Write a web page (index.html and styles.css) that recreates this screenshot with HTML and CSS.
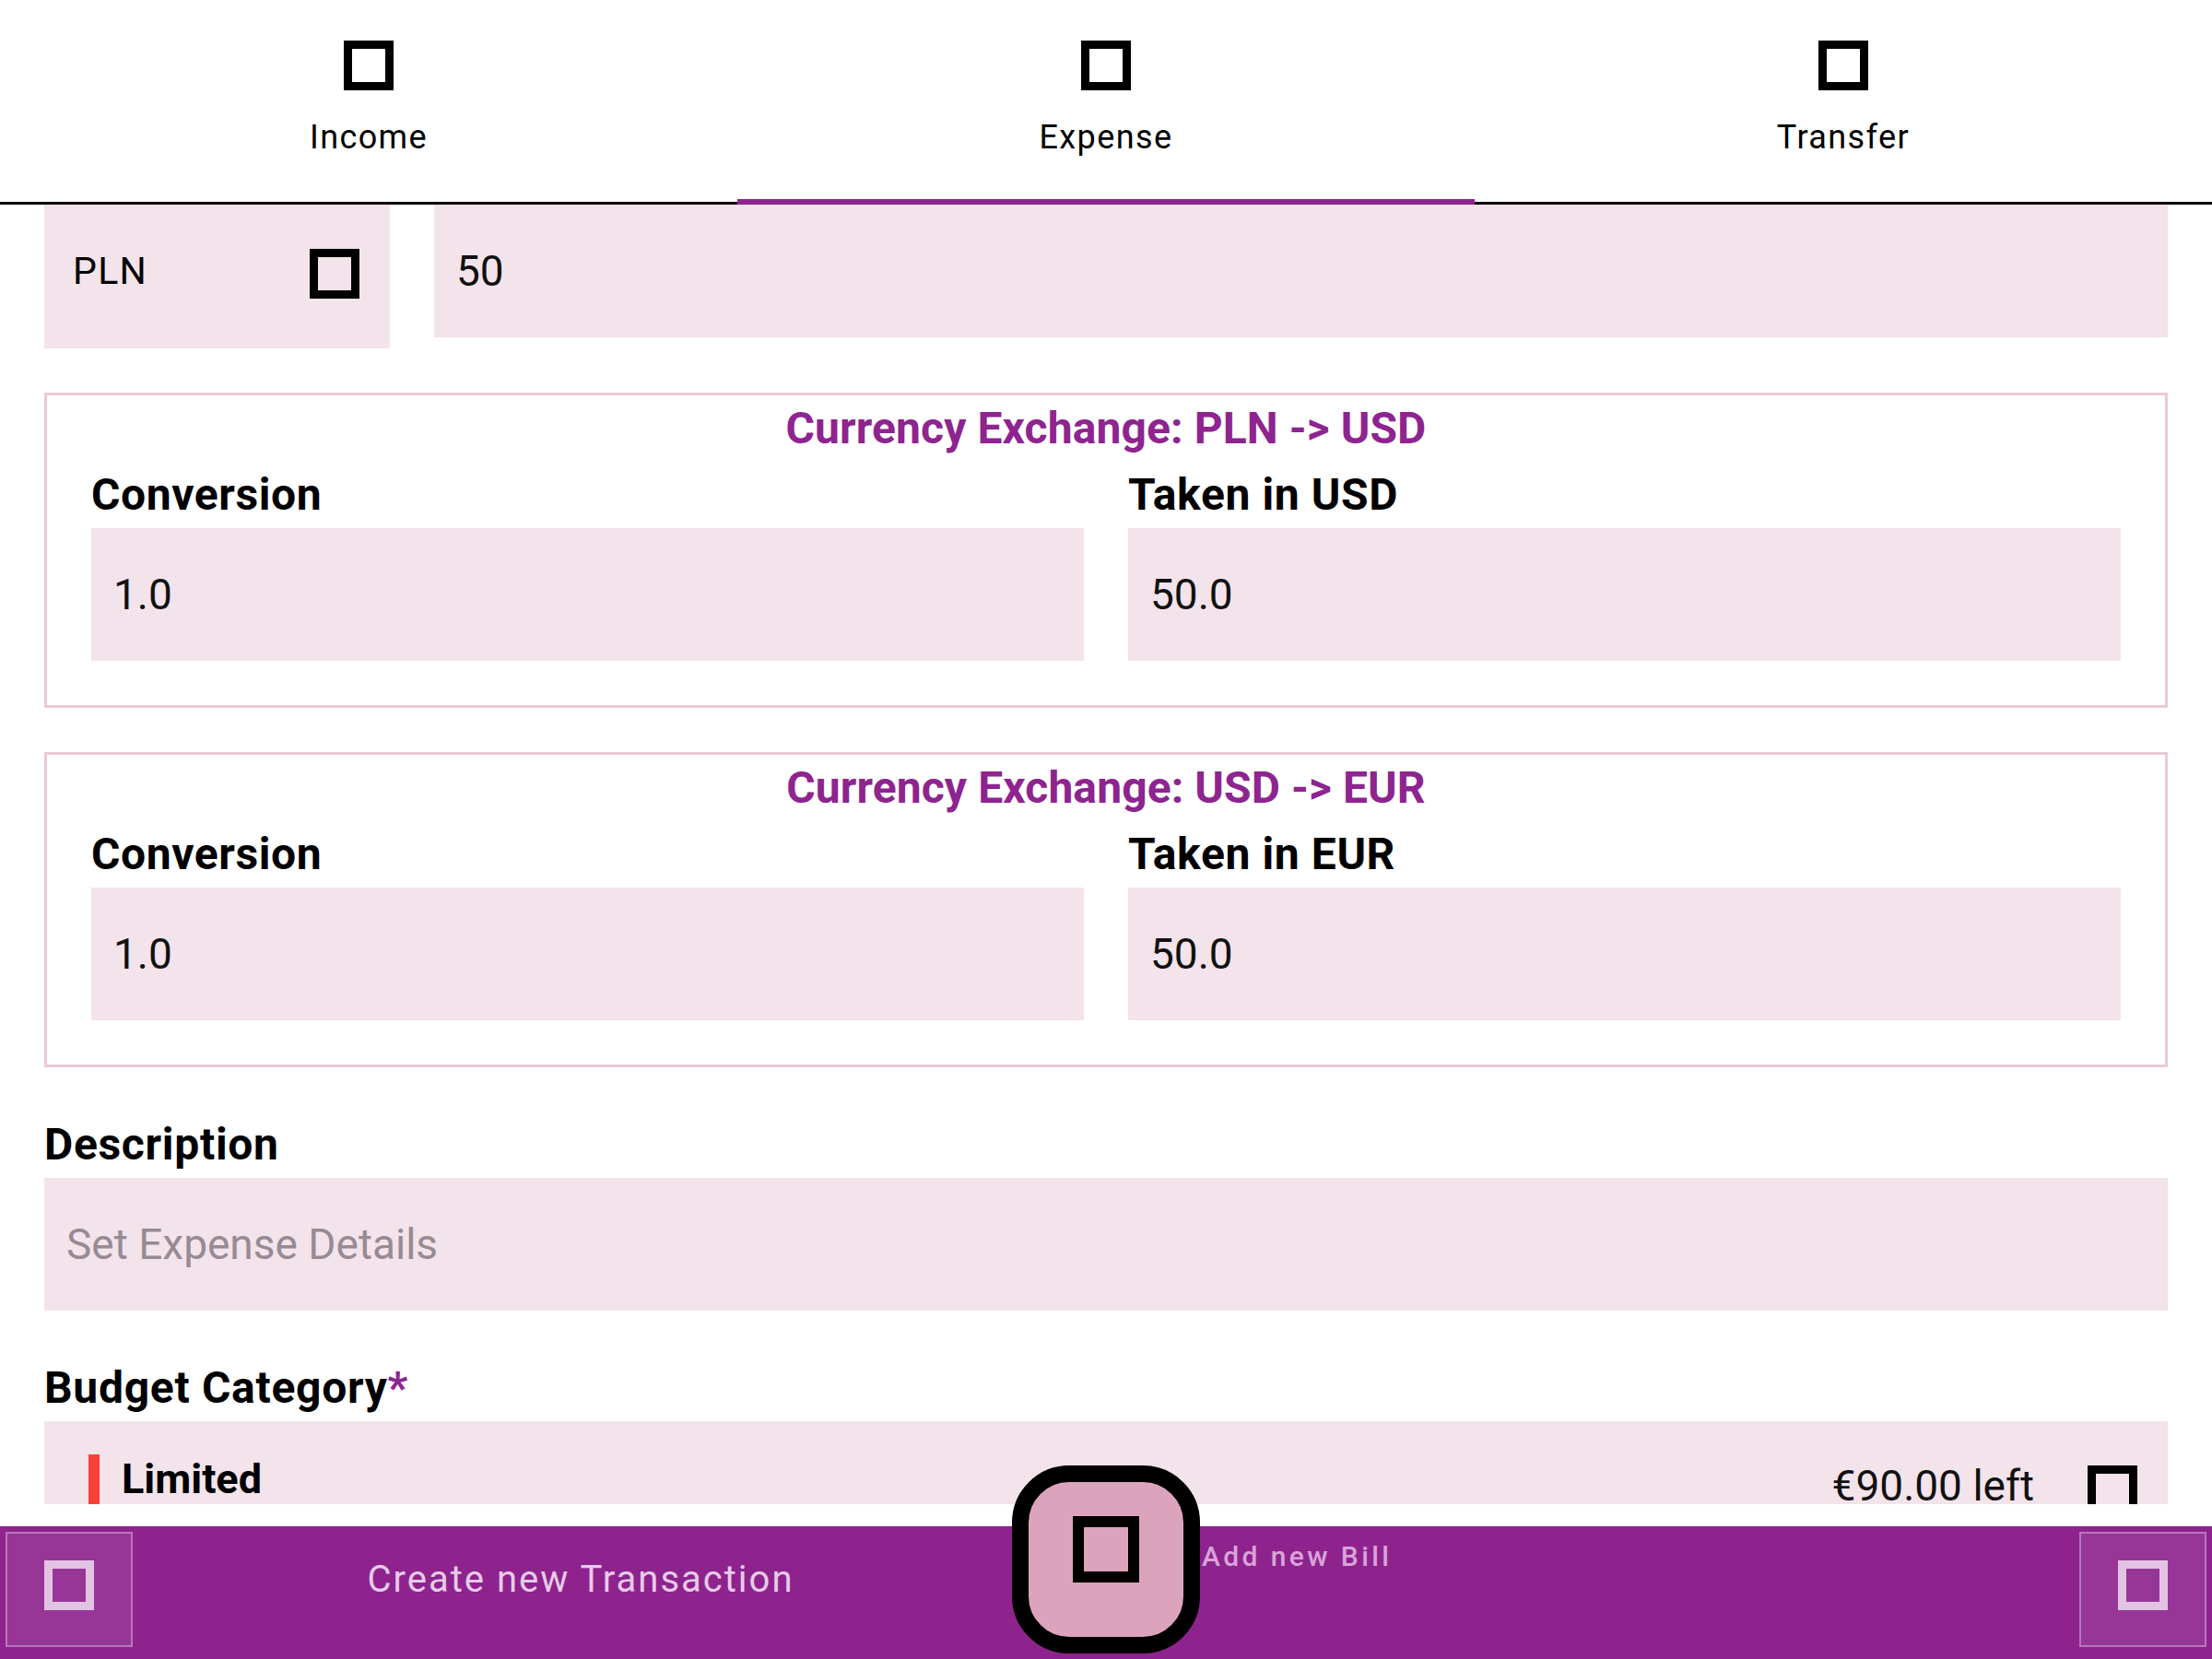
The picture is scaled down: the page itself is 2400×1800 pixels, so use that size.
FILE: index.html
```html
<!DOCTYPE html>
<html lang="en">
<head>
<meta charset="utf-8">
<title>New Expense</title>
<link rel="stylesheet" href="styles.css">
</head>
<body>
<div class="app">
  <nav class="tabs">
    <div class="tab"><span class="tofu"></span><span class="tab-label">Income</span></div>
    <div class="tab active"><span class="tofu"></span><span class="tab-label">Expense</span></div>
    <div class="tab"><span class="tofu"></span><span class="tab-label">Transfer</span></div>
  </nav>

  <main class="form">
    <div class="amount-row">
      <div class="currency-select"><span class="currency-code">PLN</span><span class="tofu"></span></div>
      <div class="field-input amount">50</div>
    </div>

    <section class="exchange-box">
      <h2 class="exchange-title">Currency Exchange: PLN -&gt; USD</h2>
      <div class="exchange-grid">
        <div class="exchange-col">
          <div class="col-label">Conversion</div>
          <div class="field-input">1.0</div>
        </div>
        <div class="exchange-col">
          <div class="col-label">Taken in USD</div>
          <div class="field-input">50.0</div>
        </div>
      </div>
    </section>

    <section class="exchange-box">
      <h2 class="exchange-title">Currency Exchange: USD -&gt; EUR</h2>
      <div class="exchange-grid">
        <div class="exchange-col">
          <div class="col-label">Conversion</div>
          <div class="field-input">1.0</div>
        </div>
        <div class="exchange-col">
          <div class="col-label">Taken in EUR</div>
          <div class="field-input">50.0</div>
        </div>
      </div>
    </section>

    <section class="field">
      <div class="field-label">Description</div>
      <div class="field-input placeholder">Set Expense Details</div>
    </section>

    <section class="field">
      <div class="field-label">Budget Category<span class="required">*</span></div>
      <div class="budget-box">
        <span class="red-bar"></span>
        <span class="cat-name">Limited</span>
        <span class="grow"></span>
        <span class="left-amount">€90.00 left</span>
        <span class="tofu budget-icon"></span>
      </div>
    </section>
  </main>

  <div class="bottom-area">
    <footer class="bar">
      <div class="bar-btn left"><span class="tofu light"></span></div>
      <div class="bar-text create">Create new Transaction</div>
      <div class="fab-space"></div>
      <div class="bar-text bill">Add new Bill</div>
      <div class="bar-btn right"><span class="tofu light"></span></div>
      <button class="fab"><span class="tofu fab-icon"></span></button>
    </footer>
  </div>
</div>
</body>
</html>
```

FILE: styles.css
```css
html, body {
  margin: 0;
  padding: 0;
  background: #ffffff;
}

body {
  font-family: Roboto, "Liberation Sans", sans-serif;
  color: #000;
}

.app {
  width: 2400px;
  height: 1800px;
  display: flex;
  flex-direction: column;
  overflow: hidden;
  background: #fff;
}

/* ---------- tabs ---------- */
.tabs {
  flex: none;
  height: 222px;
  box-sizing: border-box;
  border-bottom: 3px solid #000;
  display: grid;
  grid-template-columns: repeat(3, 1fr);
}

.tab {
  position: relative;
  display: flex;
  flex-direction: column;
  align-items: center;
  padding-top: 44px;
}

.tab.active::after {
  content: "";
  position: absolute;
  left: 0;
  right: 0;
  bottom: -3px;
  height: 6px;
  background: #8e248e;
}

.tab-label {
  margin-top: 33px;
  font-size: 36px;
  line-height: 36px;
  letter-spacing: 1.4px;
  color: #000;
}

.tofu {
  display: block;
  flex: none;
  width: 54px;
  height: 54px;
  box-sizing: border-box;
  border: 9px solid #000;
}

/* ---------- form ---------- */
.form {
  flex: 1;
  min-height: 0;
  overflow: hidden;
  padding: 0 48px;
  display: flex;
  flex-direction: column;
  gap: 48px;
}

.amount-row {
  flex: none;
  display: flex;
  align-items: flex-start;
  gap: 48px;
}

.currency-select {
  width: 375px;
  height: 156px;
  box-sizing: border-box;
  background: #f3e3eb;
  display: flex;
  align-items: center;
  justify-content: space-between;
  padding: 0 33px 6px 31px;
}

.currency-code {
  margin-bottom: 5px;
  font-size: 41px;
  line-height: 41px;
  letter-spacing: 1.3px;
}

.field-input {
  height: 144px;
  box-sizing: border-box;
  background: #f3e3eb;
  display: flex;
  align-items: center;
  padding-left: 24px;
  font-size: 46px;
  line-height: 46px;
  color: #111;
}

.amount {
  flex: 1;
}

.exchange-box {
  flex: none;
  border: 3px solid #ebc9d9;
  padding: 12px 48px 48px;
}

.exchange-title {
  margin: 0;
  font-size: 48px;
  line-height: 48px;
  font-weight: 700;
  letter-spacing: 0.1px;
  text-align: center;
  color: #8e248f;
}

.exchange-grid {
  display: grid;
  grid-template-columns: 1fr 1fr;
  column-gap: 48px;
}

.col-label {
  margin-top: 24px;
  margin-bottom: 12px;
  font-size: 48px;
  line-height: 48px;
  font-weight: 700;
  letter-spacing: 0.6px;
}

.field {
  flex: none;
}

.field-label {
  padding-top: 12px;
  margin-bottom: 12px;
  font-size: 48px;
  line-height: 48px;
  font-weight: 700;
  letter-spacing: 0.7px;
}

.required {
  color: #8e248f;
}

.placeholder {
  color: #978b93;
}

.budget-box {
  height: 144px;
  box-sizing: border-box;
  background: #f3e3eb;
  display: flex;
  align-items: flex-start;
  padding: 36px 33px 0 48px;
}

.red-bar {
  width: 12px;
  height: 72px;
  background: #f44336;
  flex: none;
}

.cat-name {
  margin-left: 24px;
  margin-top: 6px;
  font-size: 45px;
  line-height: 42px;
  font-weight: 700;
  letter-spacing: 0;
}

.grow {
  flex: 1;
}

.left-amount {
  margin-top: 16px;
  margin-right: 58px;
  font-size: 46px;
  line-height: 36px;
  color: #111;
}

.budget-icon {
  margin-top: 12px;
}

/* ---------- bottom bar ---------- */
.bottom-area {
  flex: none;
  padding-top: 24px;
}

.bar {
  position: relative;
  height: 144px;
  background: #8e238e;
  display: grid;
  grid-template-columns: 144px 1fr 168px 1fr 144px;
}

.bar-btn {
  width: 138px;
  height: 125px;
  margin-top: 6px;
  box-sizing: border-box;
  border: 2px solid rgba(255, 255, 255, 0.32);
  background: rgba(255, 255, 255, 0.09);
  display: flex;
  align-items: center;
  justify-content: center;
  padding-bottom: 10px;
}

.bar-btn.left {
  justify-self: end;
}

.bar-btn.right {
  justify-self: start;
}

.tofu.light {
  border-color: #e3c3e3;
}

.bar-text.create {
  margin-top: 38px;
  text-align: center;
  font-size: 40px;
  line-height: 40px;
  letter-spacing: 2px;
  color: #e8cbe8;
}

.bar-text.bill {
  margin-top: 18px;
  padding-left: 20px;
  font-size: 30px;
  line-height: 30px;
  font-weight: 500;
  letter-spacing: 3.4px;
  color: #d8a4d8;
}

.fab {
  position: absolute;
  left: 50%;
  top: -66px;
  transform: translateX(-50%);
  width: 204px;
  height: 204px;
  box-sizing: border-box;
  margin: 0;
  padding: 0 0 22px;
  border: 18px solid #000;
  border-radius: 62px;
  background: #dca3bd;
  display: flex;
  align-items: center;
  justify-content: center;
}

.tofu.fab-icon {
  width: 72px;
  height: 72px;
  border-width: 12px;
}
```
